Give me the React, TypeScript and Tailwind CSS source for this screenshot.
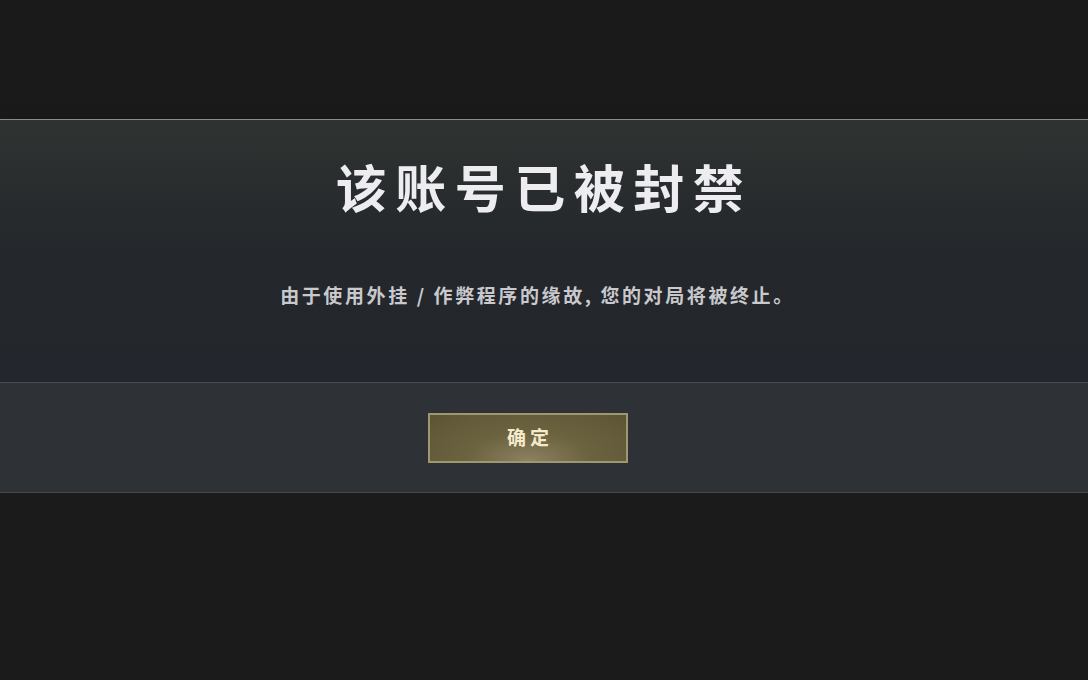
export default function App() {
  const cjk = { fontFamily: '"Noto Sans CJK SC", "Noto Sans", sans-serif' };
  return (
    <div className="w-[1088px] h-[680px] bg-[#1b1b1b] flex flex-col overflow-hidden" style={cjk}>
      <div className="h-[119px] shrink-0 bg-[#1a1a1a]" />
      <div className="shrink-0 border-t border-[#8c8c82] shadow-[0_14px_20px_rgba(0,0,0,0.6)]">
        <div className="h-[262px] flex flex-col items-center bg-gradient-to-b from-[#2f3331] via-[#24272b] to-[#23262c]">
          <div className="mt-[30px] text-[51px] leading-[72px] font-bold text-[#ededf1] tracking-[8.5px]">该账号已被封禁</div>
          <div className="mt-[60px] text-[19px] leading-[26px] font-bold text-[#c9c9cd] tracking-[2.6px] mr-[13px]">由于使用外挂 / 作弊程序的缘故, 您的对局将被终止。</div>
        </div>
        <div className="h-[111px] border-t border-[#484b4c] border-b bg-[#2e3135] flex items-center justify-center">
          <button className="mr-[32px] w-[200px] h-[50px] border-2 border-[#9d9870] bg-[radial-gradient(ellipse_at_50%_100%,#8c8160_0%,#6b6240_45%,#5c5533_100%)] text-[#f3ebcb] text-[19px] font-bold tracking-[4px] pl-[4px] flex items-center justify-center">确定</button>
        </div>
      </div>
      <div className="flex-1 bg-[#1b1b1b]" />
    </div>
  );
}
